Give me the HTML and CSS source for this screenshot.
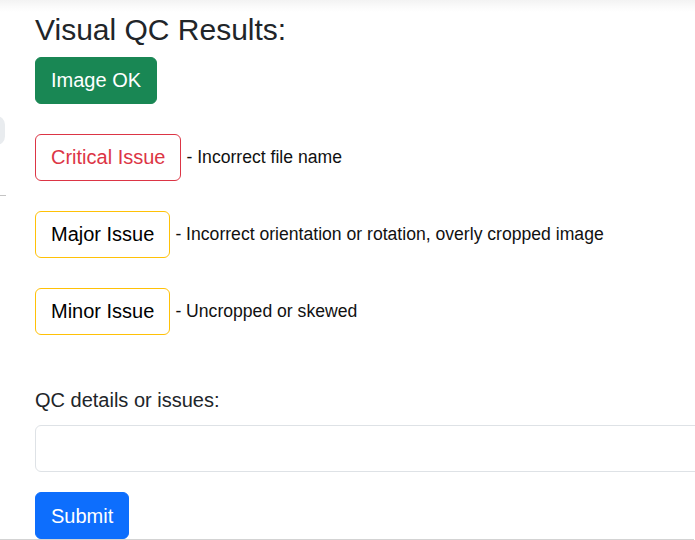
FILE: index.html
```html
<!DOCTYPE html>
<html lang="en">
<head>
<meta charset="utf-8">
<title>Visual QC Results</title>
<link rel="stylesheet" href="styles.css">
</head>
<body>
<div class="topshade"></div>
<div class="edge-tab"></div>
<div class="edge-line"></div>
<main class="page">
  <h2 class="title">Visual QC Results:</h2>
  <div class="results">
    <div class="row"><button class="btn btn-ok">Image OK</button></div>
    <div class="row"><button class="btn btn-critical">Critical Issue</button><span class="desc">- Incorrect file name</span></div>
    <div class="row"><button class="btn btn-warn">Major Issue</button><span class="desc">- Incorrect orientation or rotation, overly cropped image</span></div>
    <div class="row"><button class="btn btn-warn">Minor Issue</button><span class="desc">- Uncropped or skewed</span></div>
  </div>
  <form class="details">
    <label class="label" for="qc">QC details or issues:</label>
    <input class="field" id="qc" type="text">
    <div class="actions"><button class="btn btn-submit" type="button">Submit</button></div>
  </form>
</main>
<div class="bottomline"></div>
</body>
</html>
```
FILE: styles.css
```css
html, body {
  margin: 0;
  padding: 0;
  background: #fff;
  overflow: hidden;
  height: 540px;
}
body {
  font-family: "Liberation Sans", Arial, sans-serif;
  color: #212529;
  position: relative;
}
.topshade {
  height: 12px;
  background: linear-gradient(#f3f3f3, #fbfbfb 60%, #fff);
}
.edge-tab {
  position: absolute;
  left: -12px;
  top: 116px;
  width: 17px;
  height: 29px;
  border-radius: 10px;
  background: #e9ecef;
}
.edge-line {
  position: absolute;
  left: 0;
  top: 195px;
  width: 6px;
  height: 1px;
  background: #c4c4c4;
}
.page {
  padding-left: 35px;
  overflow: hidden;
}
.title {
  margin: 0;
  font-size: 30px;
  font-weight: 400;
  line-height: 36px;
  color: #212529;
}
.results {
  margin-top: 9px;
  display: flex;
  flex-direction: column;
  gap: 30px;
}
.row {
  display: flex;
  align-items: center;
  gap: 5px;
}
.btn {
  font-family: "Liberation Sans", Arial, sans-serif;
  font-size: 20px;
  line-height: 29px;
  padding: 8px 15px;
  border: 1px solid transparent;
  border-radius: 6px;
  background: #fff;
  cursor: pointer;
}
.btn-ok {
  background: #198754;
  border-color: #198754;
  color: #fff;
}
.btn-critical {
  border-color: #dc3545;
  color: #dc3545;
}
.btn-warn {
  border-color: #ffc107;
  color: #000;
}
.btn-submit {
  background: #0d6efd;
  border-color: #0d6efd;
  color: #fff;
  padding-top: 9px;
  padding-bottom: 7px;
}
.desc {
  font-size: 17.6px;
  color: #111;
}
.details {
  margin: 50px -40px 0 0;
  display: flex;
  flex-direction: column;
}
.label {
  font-size: 20px;
  line-height: 30px;
}
.field {
  margin-top: 10px;
  width: 100%;
  height: 47px;
  box-sizing: border-box;
  border: 1px solid #dee2e6;
  border-radius: 6px;
  font-size: 20px;
  padding: 8px 16px;
}
.actions {
  margin-top: 20px;
}
.bottomline {
  height: 1px;
  background: #d3d3d3;
  width: 694px;
}
```
